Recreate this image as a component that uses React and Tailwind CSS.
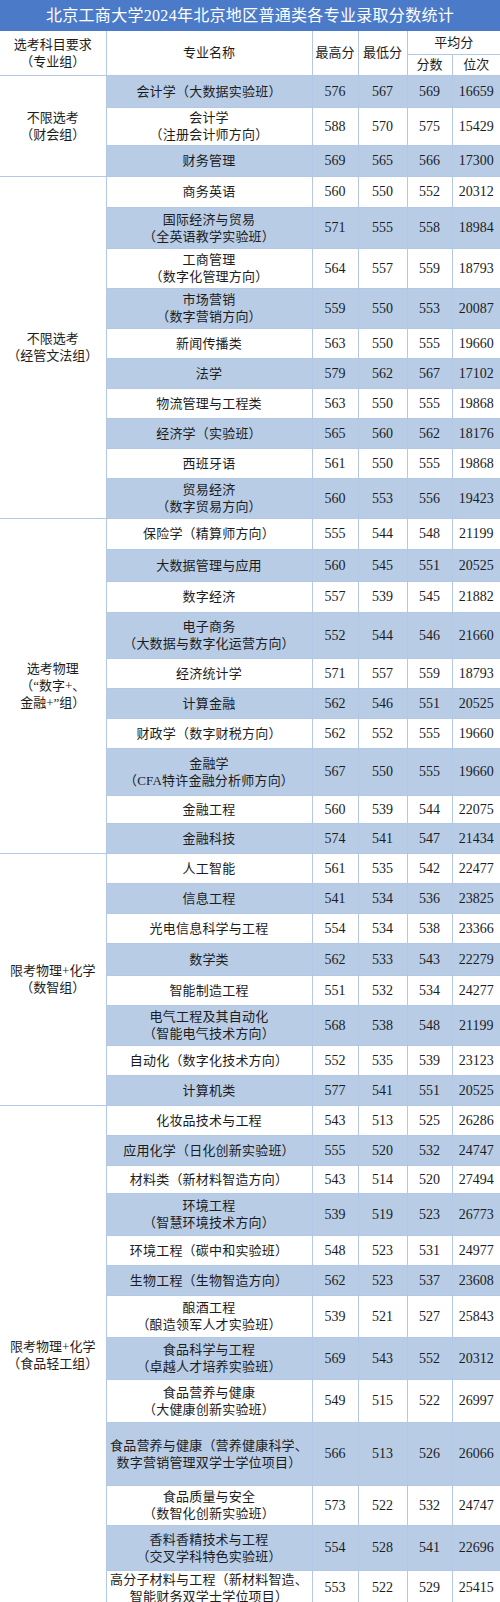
import React from "react";

const groups = [
  {
    label: ["不限选考", "（财会组）"],
    rows: [
      { name: ["会计学（大数据实验班）"], v: [576, 567, 569, 16659], h: "h-[32px]" },
      { name: ["会计学", "（注册会计师方向）"], v: [588, 570, 575, 15429], h: "h-[38px]" },
      { name: ["财务管理"], v: [569, 565, 566, 17300], h: "h-[31px]" },
    ],
  },
  {
    label: ["不限选考", "（经管文法组）"],
    rows: [
      { name: ["商务英语"], v: [560, 550, 552, 20312], h: "h-[31px]" },
      { name: ["国际经济与贸易", "（全英语教学实验班）"], v: [571, 555, 558, 18984], h: "h-[41px]" },
      { name: ["工商管理", "（数字化管理方向）"], v: [564, 557, 559, 18793], h: "h-[40px]" },
      { name: ["市场营销", "（数字营销方向）"], v: [559, 550, 553, 20087], h: "h-[40px]" },
      { name: ["新闻传播类"], v: [563, 550, 555, 19660], h: "h-[30px]" },
      { name: ["法学"], v: [579, 562, 567, 17102], h: "h-[30px]" },
      { name: ["物流管理与工程类"], v: [563, 550, 555, 19868], h: "h-[30px]" },
      { name: ["经济学（实验班）"], v: [565, 560, 562, 18176], h: "h-[30px]" },
      { name: ["西班牙语"], v: [561, 550, 555, 19868], h: "h-[30px]" },
      { name: ["贸易经济", "（数字贸易方向）"], v: [560, 553, 556, 19423], h: "h-[40px]" },
    ],
  },
  {
    label: ["选考物理", "（“数字+、", "金融+”组）"],
    rows: [
      { name: ["保险学（精算师方向）"], v: [555, 544, 548, 21199], h: "h-[31px]" },
      { name: ["大数据管理与应用"], v: [560, 545, 551, 20525], h: "h-[32px]" },
      { name: ["数字经济"], v: [557, 539, 545, 21882], h: "h-[31px]" },
      { name: ["电子商务", "（大数据与数字化运营方向）"], v: [552, 544, 546, 21660], h: "h-[46px]" },
      { name: ["经济统计学"], v: [571, 557, 559, 18793], h: "h-[30px]" },
      { name: ["计算金融"], v: [562, 546, 551, 20525], h: "h-[30px]" },
      { name: ["财政学（数字财税方向）"], v: [562, 552, 555, 19660], h: "h-[30px]" },
      { name: ["金融学", "（CFA特许金融分析师方向）"], v: [567, 550, 555, 19660], h: "h-[47px]" },
      { name: ["金融工程"], v: [560, 539, 544, 22075], h: "h-[28px]" },
      { name: ["金融科技"], v: [574, 541, 547, 21434], h: "h-[30px]" },
    ],
  },
  {
    label: ["限考物理+化学", "（数智组）"],
    rows: [
      { name: ["人工智能"], v: [561, 535, 542, 22477], h: "h-[30px]" },
      { name: ["信息工程"], v: [541, 534, 536, 23825], h: "h-[30px]" },
      { name: ["光电信息科学与工程"], v: [554, 534, 538, 23366], h: "h-[30px]" },
      { name: ["数学类"], v: [562, 533, 543, 22279], h: "h-[32px]" },
      { name: ["智能制造工程"], v: [551, 532, 534, 24277], h: "h-[30px]" },
      { name: ["电气工程及其自动化", "（智能电气技术方向）"], v: [568, 538, 548, 21199], h: "h-[40px]" },
      { name: ["自动化（数字化技术方向）"], v: [552, 535, 539, 23123], h: "h-[30px]" },
      { name: ["计算机类"], v: [577, 541, 551, 20525], h: "h-[30px]" },
    ],
  },
  {
    label: ["限考物理+化学", "（食品轻工组）"],
    rows: [
      { name: ["化妆品技术与工程"], v: [543, 513, 525, 26286], h: "h-[30px]" },
      { name: ["应用化学（日化创新实验班）"], v: [555, 520, 532, 24747], h: "h-[30px]" },
      { name: ["材料类（新材料智造方向）"], v: [543, 514, 520, 27494], h: "h-[28px]" },
      { name: ["环境工程", "（智慧环境技术方向）"], v: [539, 519, 523, 26773], h: "h-[42px]" },
      { name: ["环境工程（碳中和实验班）"], v: [548, 523, 531, 24977], h: "h-[30px]" },
      { name: ["生物工程（生物智造方向）"], v: [562, 523, 537, 23608], h: "h-[30px]" },
      { name: ["酿酒工程", "（酿造领军人才实验班）"], v: [539, 521, 527, 25843], h: "h-[42px]" },
      { name: ["食品科学与工程", "（卓越人才培养实验班）"], v: [569, 543, 552, 20312], h: "h-[42px]" },
      { name: ["食品营养与健康", "（大健康创新实验班）"], v: [549, 515, 522, 26997], h: "h-[43px]" },
      { name: ["食品营养与健康（营养健康科学、", "数字营销管理双学士学位项目）"], v: [566, 513, 526, 26066], h: "h-[63px]" },
      { name: ["食品质量与安全", "（数智化创新实验班）"], v: [573, 522, 532, 24747], h: "h-[40px]" },
      { name: ["香料香精技术与工程", "（交叉学科特色实验班）"], v: [554, 528, 541, 22696], h: "h-[45px]" },
      { name: ["高分子材料与工程（新材料智造、", "智能财务双学士学位项目）"], v: [553, 522, 529, 25415], h: "h-[34px]" },
    ],
  },
];

const cjk = "font-['Liberation_Serif','Noto_Sans_CJK_SC',serif]";
const cell = "border border-[#b3c8e5] p-0 text-center align-middle";

export default function App() {
  let idx = 0;
  return (
    <div className={`w-[500px] bg-white text-[#1c1c1c] ${cjk}`}>
      <div className="h-[31px] bg-[#4b7bc8] text-white text-[16px] leading-[31px] text-center tracking-[0.3px]">
        北京工商大学2024年北京地区普通类各专业录取分数统计
      </div>
      <table className="w-[500px] table-fixed border-collapse">
        <colgroup>
          <col className="w-[106px]" />
          <col className="w-[206px]" />
          <col className="w-[46px]" />
          <col className="w-[49px]" />
          <col className="w-[45px]" />
          <col className="w-[48px]" />
        </colgroup>
        <thead>
          <tr className="h-[23px]">
            <td rowSpan={2} className={`${cell} border-t-0 border-l-0 text-[13px] leading-[17px]`}>
              选考科目要求
              <br />
              （专业组）
            </td>
            <td rowSpan={2} className={`${cell} border-t-0 text-[13px]`}>专业名称</td>
            <td rowSpan={2} className={`${cell} border-t-0 text-[13px]`}>最高分</td>
            <td rowSpan={2} className={`${cell} border-t-0 text-[13px]`}>最低分</td>
            <td colSpan={2} className={`${cell} border-t-0 border-r-0 text-[13px]`}>平均分</td>
          </tr>
          <tr className="h-[21px]">
            <td className={`${cell} text-[13px]`}>分数</td>
            <td className={`${cell} border-r-0 text-[13px]`}>位次</td>
          </tr>
        </thead>
        <tbody>
          {groups.map((g, gi) =>
            g.rows.map((r, ri) => {
              const blue = idx++ % 2 === 0;
              const bg = blue ? "bg-[#b8cce6]" : "bg-white";
              return (
                <tr key={`${gi}-${ri}`} className={r.h}>
                  {ri === 0 && (
                    <td
                      rowSpan={g.rows.length}
                      className={`${cell} border-l-0 bg-white text-[13px] leading-[17px]`}
                    >
                      {g.label.map((l, li) => (
                        <div key={li}>{l}</div>
                      ))}
                    </td>
                  )}
                  <td className={`${cell} ${bg} text-[13px] leading-[17px] tracking-[0.2px]`}>
                    {r.name.map((n, ni) => (
                      <div key={ni} className="whitespace-nowrap">
                        {n}
                      </div>
                    ))}
                  </td>
                  {r.v.map((v, vi) => (
                    <td
                      key={vi}
                      className={`${cell} ${bg} ${vi === 3 ? "border-r-0" : ""} text-[14px]`}
                    >
                      {v}
                    </td>
                  ))}
                </tr>
              );
            })
          )}
        </tbody>
      </table>
    </div>
  );
}
